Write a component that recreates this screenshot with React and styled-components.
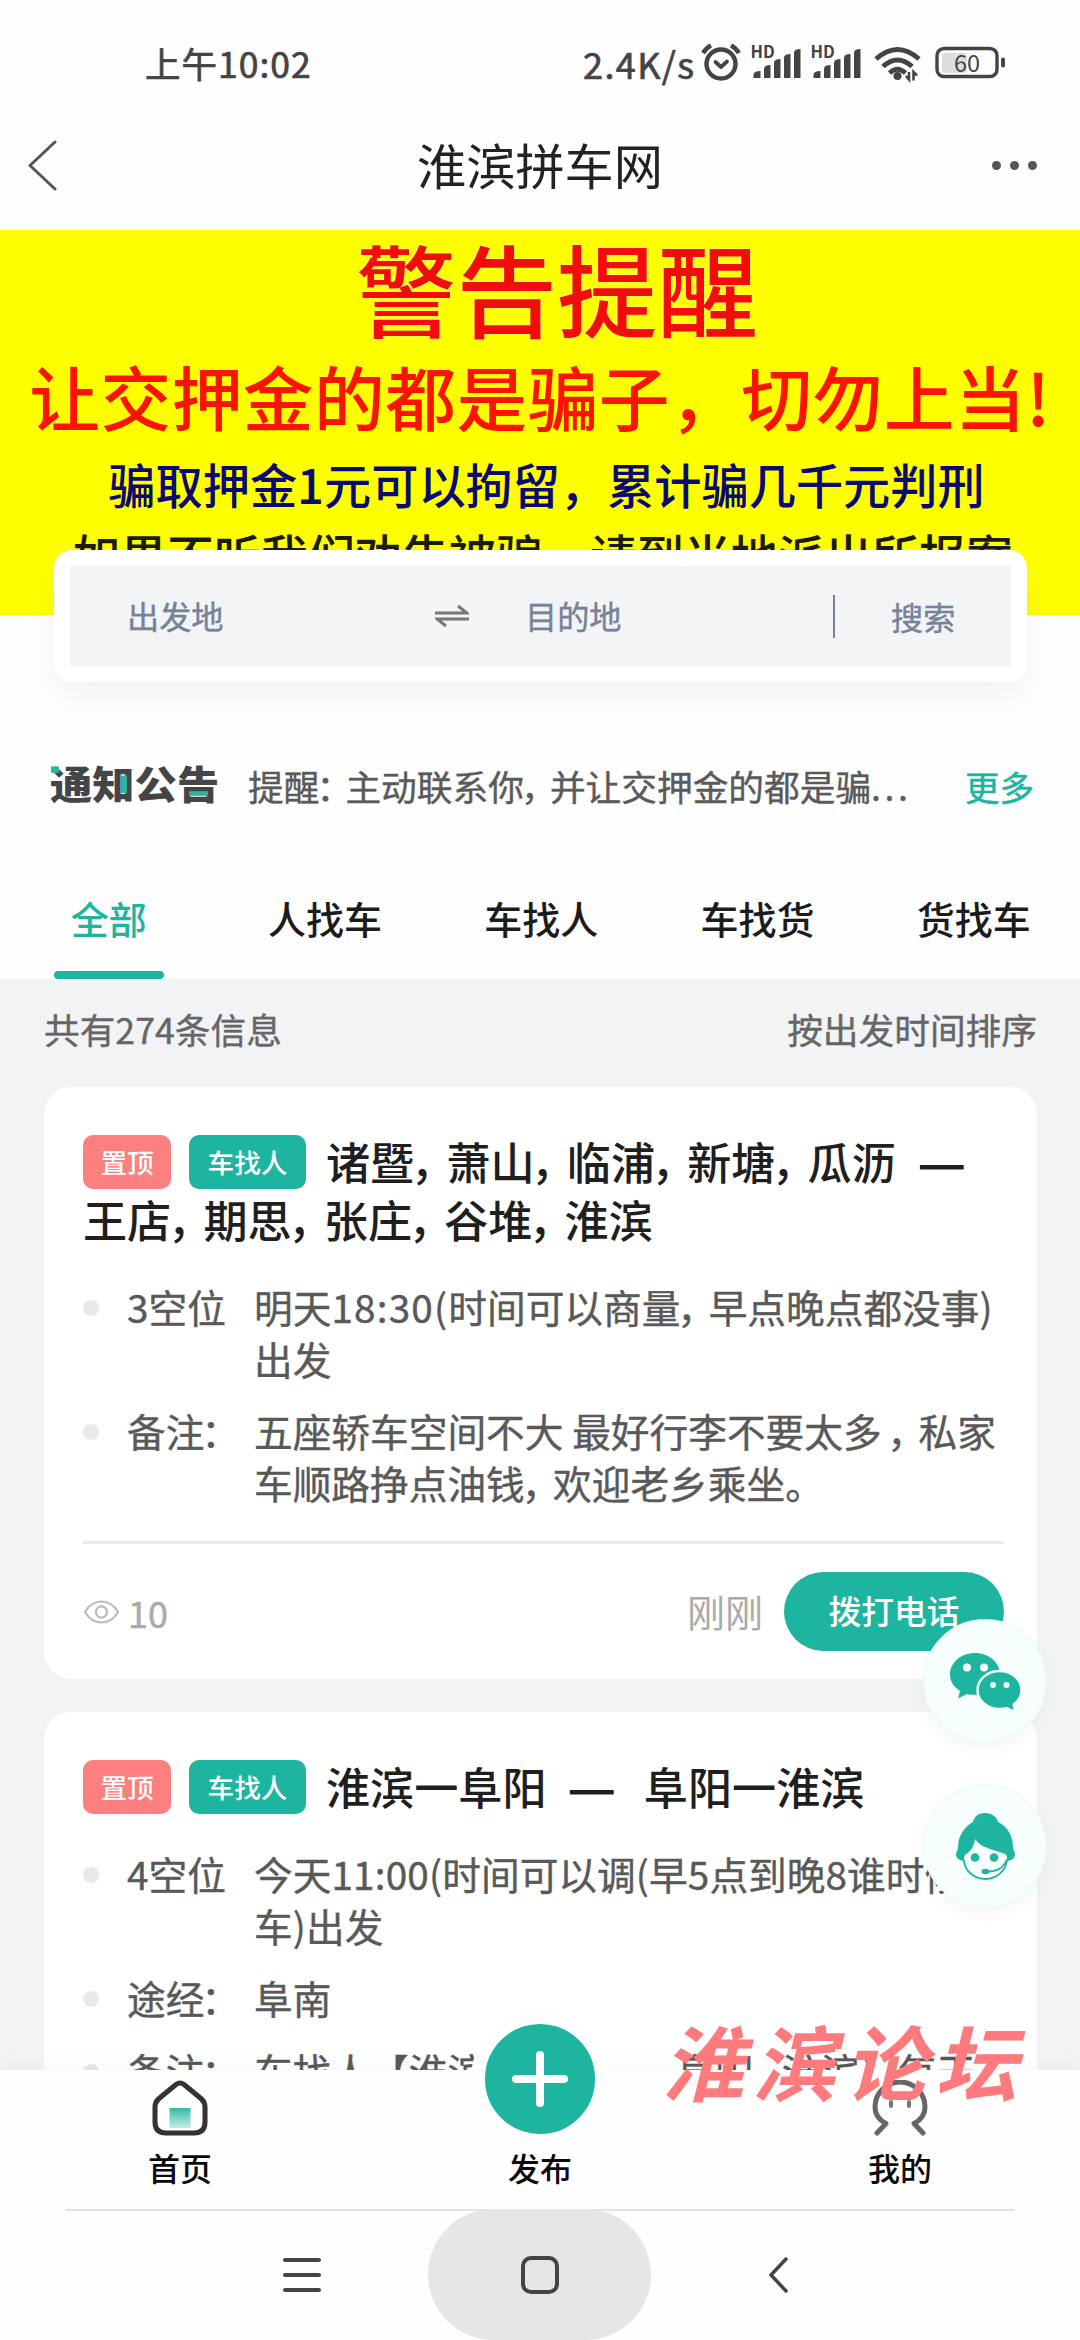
import React from "react";
import styled, { createGlobalStyle } from "styled-components";

const teal = "#1db59f";
const grey = "#f2f3f5";

const GlobalStyle = createGlobalStyle`
  * {
    box-sizing: border-box;
  }
  body {
    margin: 0;
    background: #fefefe;
    font-family: "Noto Sans CJK SC", "Noto Sans", sans-serif;
  }
`;

const Page = styled.div`
  position: relative;
  display: flex;
  flex-direction: column;
  width: 1080px;
  height: 2340px;
  overflow: hidden;
  background: #fefefe;
`;

/* ---------- status bar ---------- */

const StatusBar = styled.div`
  display: flex;
  justify-content: space-between;
  align-items: center;
  height: 104px;
  padding: 22px 74px 0 145px;
  color: #444;
`;

const Clock = styled.div`
  font-size: 35.5px;
  line-height: 40px;
  letter-spacing: 1px;
  -webkit-text-stroke: 0.7px #444;
`;

const StatusIcons = styled.div`
  display: flex;
  align-items: center;
  color: #444;
`;

const NetSpeed = styled.div`
  width: 117px;
  font-size: 36px;
  line-height: 40px;
  letter-spacing: 1.4px;
  white-space: nowrap;
  -webkit-text-stroke: 0.7px #444;
`;

const StatusSvg = styled.svg`
  display: block;
  font-family: "Noto Sans CJK SC", sans-serif;
`;

/* ---------- title bar ---------- */

const TitleBar = styled.header`
  display: grid;
  grid-template-columns: 200px 1fr 200px;
  align-items: center;
  height: 126px;
  padding: 0 43px 4px 27px;
`;

const PageTitle = styled.h1`
  margin: 0;
  padding-left: 16px;
  text-align: center;
  font-size: 49.2px;
  font-weight: 400;
  line-height: 60px;
  color: #222;
  transform: translateY(-1px);
`;

const MoreDots = styled.div`
  display: flex;
  justify-content: flex-end;
  gap: 9px;
`;

const Dot = styled.i`
  width: 9px;
  height: 9px;
  border-radius: 50%;
  background: #555;
`;

/* ---------- banner ---------- */

const Banner = styled.section`
  flex: none;
  height: 385px;
  overflow: hidden;
  background: #ffff00;
  text-align: center;
  white-space: nowrap;
`;

const BannerLine = styled.div`
  height: ${(p) => p.$height}px;
  line-height: ${(p) => p.$height}px;
  padding-left: ${(p) => p.$indent || 0}px;
  font-size: ${(p) => p.$size}px;
  font-weight: 500;
  letter-spacing: ${(p) => p.$track || 0}px;
  color: ${(p) => p.$color};
  text-shadow: 0 0 3px ${(p) => p.$glow || "transparent"};
  transform: translateY(${(p) => -p.$size * 0.055}px);
`;

/* ---------- search ---------- */

const SearchCard = styled.div`
  flex: none;
  z-index: 1;
  width: 973px;
  height: 132px;
  margin: -65px 0 0 54px;
  padding: 16px;
  border-radius: 18px;
  background: #fff;
  box-shadow: 0 14px 36px rgba(0, 0, 0, 0.05);
`;

const SearchFields = styled.div`
  display: grid;
  grid-template-columns: 308px 147px 308px 1fr;
  align-items: center;
  height: 100px;
  background: #f2f4f5;
  color: #75829a;
  font-size: 32.2px;
  line-height: 40px;
  -webkit-text-stroke: 0.4px #75829a;
`;

const Field = styled.div`
  padding-left: ${(p) => p.$indent || 0}px;
  transform: translateY(-1px);
`;

const SearchButton = styled.div`
  display: flex;
  align-items: center;
  height: 43px;
  padding-left: 56px;
  border-left: 2px solid #75829a;
`;

const SwapIcon = styled.svg`
  display: block;
  margin-left: 57px;
`;

/* ---------- notice ---------- */

const Notice = styled.div`
  flex: none;
  display: flex;
  align-items: center;
  height: 173px;
  padding: 34px 0 0 50px;
  font-size: 35.7px;
  line-height: 44px;
  white-space: nowrap;
`;

const NoticeLogo = styled.div`
  position: relative;
  width: 198px;
  font-size: 42.3px;
  font-weight: 900;
  color: #454545;
  transform: translateY(-4px) scaleY(0.92);
`;

const LogoAccent = styled.i`
  position: absolute;
  left: ${(p) => p.$x}px;
  top: ${(p) => p.$y}px;
  width: ${(p) => p.$w}px;
  height: ${(p) => p.$h}px;
  background: #2bb49b;
`;

const NoticeText = styled.div`
  width: 717px;
  color: #5a5a5a;
  -webkit-text-stroke: 0.4px #5a5a5a;
`;

const Ellipsis = styled.span`
  letter-spacing: 3.5px;
`;

const NoticeMore = styled.div`
  font-size: 34.5px;
  color: ${teal};
  -webkit-text-stroke: 0.5px ${teal};
`;

/* ---------- tabs ---------- */

const Tabs = styled.nav`
  flex: none;
  display: grid;
  grid-template-columns: repeat(5, 216.3px);
  height: 124px;
`;

const Tab = styled.div`
  display: flex;
  flex-direction: column;
  align-items: center;
  justify-content: flex-end;
  gap: 28px;
  padding-left: 1px;
  font-size: 38px;
  font-weight: 500;
  line-height: 50px;
  color: ${(p) => (p.$active ? teal : "#1c1c1c")};

  &::after {
    content: "";
    width: 110px;
    height: 8px;
    border-radius: 4px;
    background: ${(p) => (p.$active ? teal : "transparent")};
  }
`;

/* ---------- list ---------- */

const ListArea = styled.main`
  flex: 1;
  min-height: 0;
  overflow: hidden;
  padding: 0 43px 0 44px;
  background: ${grey};
`;

const ListHead = styled.div`
  display: flex;
  justify-content: space-between;
  height: 108px;
  line-height: 100px;
  font-size: 35.7px;
  color: #666;
  -webkit-text-stroke: 0.4px #666;
`;

const Card = styled.article`
  display: flex;
  flex-direction: column;
  height: 592px;
  margin-bottom: 33px;
  padding: 45px 33px 0 39px;
  border-radius: 27px;
  background: #fff;
`;

const CardTitle = styled.h2`
  margin: 0 -20px 0 0;
  font-size: 44.1px;
  font-weight: 500;
  line-height: 58px;
  color: #1f1f1f;
  white-space: pre;
`;

const TitleLine = styled.div`
  display: flex;
  align-items: center;
  height: 58px;
`;

const Tag = styled.span`
  flex: none;
  width: ${(p) => p.$width}px;
  height: 54px;
  margin-right: ${(p) => p.$gap}px;
  border-radius: 10px;
  background: ${(p) => p.$bg};
  color: #fff;
  font-size: 26.6px;
  line-height: 53px;
  text-align: center;
  transform: translateY(1px);
`;

const Dash = styled.span`
  display: inline-block;
  margin: 0 12px 0 6px;
  transform: scaleX(1.2);
  -webkit-text-stroke: 1px #1f1f1f;
`;

const Details = styled.div`
  display: flex;
  flex-direction: column;
  gap: 21px;
  margin-top: 34px;
`;

const Detail = styled.div`
  display: grid;
  grid-template-columns: 44px 127px 1fr;
  font-size: 38.7px;
  line-height: 51.6px;
  color: #595959;
  white-space: pre;
  -webkit-text-stroke: 0.4px #595959;

  &::before {
    content: "";
    width: 16px;
    height: 16px;
    margin-top: 18px;
    border-radius: 50%;
    background: #e9e9e9;
  }
`;

const DetailText = styled.div`
  transform: translateY(-1px);
`;

/* full-width marks are set narrower than one em */
const NarrowMark = styled.span`
  display: inline-block;
  width: 0.73em;
  text-indent: -0.08em;
`;

const Digits = styled.span`
  letter-spacing: ${(p) => p.$track}px;
`;

const CardFoot = styled.div`
  display: flex;
  align-items: center;
  height: 139px;
  margin-top: 32px;
  border-top: 3px solid #ebebeb;
  color: #aaa;
  font-size: 38px;
`;

const Views = styled.div`
  display: flex;
  align-items: center;
  gap: 8px;
  flex: 1;
  font-size: 36px;
  line-height: 40px;
  -webkit-text-stroke: 0.5px #aaa;
`;

const PostedAt = styled.span`
  margin-right: 21px;
  transform: translateY(-1px);
`;

const CallButton = styled.div`
  width: 220px;
  height: 79px;
  border-radius: 40px;
  background: ${teal};
  color: #fff;
  font-size: 32.8px;
  font-weight: 500;
  line-height: 76px;
  text-align: center;
`;

/* ---------- floating buttons ---------- */

const FloatStack = styled.div`
  position: absolute;
  top: 1619px;
  left: 923px;
  display: flex;
  flex-direction: column;
  gap: 41px;
`;

const FloatButton = styled.div`
  width: 124px;
  height: 124px;
  border-radius: 50%;
  background: #f6fffe;
  border: 2px solid #ebfdf9;
  box-shadow: 0 6px 16px rgba(0, 0, 0, 0.04);

  svg {
    display: block;
    margin: -2px;
  }
`;

/* ---------- bottom bar ---------- */

const BottomBar = styled.footer`
  flex: none;
  position: relative;
  display: grid;
  grid-template-columns: repeat(3, 360px);
  grid-template-rows: 139px;
  background: #fefefe;
  box-shadow: 0 -4px 24px rgba(0, 0, 0, 0.035);
`;

const BottomItem = styled.div`
  display: flex;
  flex-direction: column;
  align-items: center;
  justify-content: flex-end;
  height: 139px;
  padding-bottom: 18px;
  font-size: 32px;
  font-weight: 500;
  line-height: 48px;
  color: #0a0a0a;

  > svg {
    display: block;
    margin-bottom: 7px;
  }
`;

const PublishCircle = styled.div`
  flex: none;
  display: flex;
  align-items: center;
  justify-content: center;
  width: 138px;
  height: 138px;
  margin-bottom: -5px;
  border: 14px solid #fefefe;
  border-radius: 50%;
  background: ${teal};
`;

const SystemNav = styled.div`
  flex: none;
  position: relative;
  display: flex;
  justify-content: center;
  align-items: center;
  height: 131px;
  padding-right: 9px;
  background: #fefefe;

  &::before {
    content: "";
    position: absolute;
    top: 0;
    left: 66px;
    right: 66px;
    height: 2px;
    background: #e2e2e2;
  }
`;

const HomePill = styled.div`
  position: relative;
  display: flex;
  align-items: center;
  justify-content: center;
  width: 223px;
  height: 131px;
  margin: 0 117px 0 107px;
  border-radius: 66px;
  background: #e6e6e6;
`;

const ForumMark = styled.div`
  position: absolute;
  left: 662px;
  top: 2005px;
  font-size: 82px;
  font-weight: 700;
  font-style: italic;
  line-height: 110px;
  letter-spacing: 9px;
  color: #ff7a7c;
  white-space: nowrap;
`;

/* ---------- icons ---------- */

const Signal = ({ x }) => (
  <g transform={`translate(${x} 0)`} fill="#444">
    <text x="-3" y="20" fontSize="16.5" fontWeight="700">HD</text>
    <path d="M0 40v-3q0-4 7-4v7z" />
    <path d="M10.500 40v-9q0-4 6.500-4v13z" />
    <path d="M20.500 40v-15q0-4 6.500-4v19z" />
    <path d="M30.500 40v-20q0-4 6.500-4v24z" />
    <path d="M40.500 40v-25q0-4 6.500-4v29z" />
  </g>
);

const StatusGlyphs = () => (
  <StatusSvg width="306" height="50" viewBox="0 0 306 50">
    <g fill="none" stroke="#444" strokeLinecap="round">
      <circle cx="21" cy="26" r="14.5" strokeWidth="4.4" />
      <path d="M15.500 24l5.500 5 6-5.500" strokeWidth="3.800" strokeLinejoin="round" />
      <path d="M3 15q3-5 8-7.500M31 7.500q5 2.500 8 7.500" strokeWidth="4.400" strokeLinecap="butt" />
    </g>
    <Signal x={53.5} />
    <Signal x={113.5} />
    <g fill="none" stroke="#444" strokeWidth="5">
      <path d="M176 21q21.500-19 43 0" />
      <path d="M183 28.500q14.500-13 29 0" />
      <path d="M189.500 35q8-7.500 16 0" strokeWidth="4.800" />
    </g>
    <circle cx="197.500" cy="38" r="4" fill="#444" />
    <path d="M209 34v7.500l-3-3.500M213.500 42.500v-8.500l3.500 3.500" fill="none" stroke="#444" strokeWidth="2.600" />
    <rect x="242" y="15" width="25" height="20" rx="3" fill="#ddd" />
    <rect x="237" y="10.500" width="60" height="28" rx="7" fill="none" stroke="#444" strokeWidth="3.400" />
    <rect x="301" y="19.500" width="4" height="10" rx="2" fill="#444" />
    <text x="267" y="33.500" fontSize="23.5" fill="#444" textAnchor="middle">60</text>
  </StatusSvg>
);

const BackIcon = ({ width, height, stroke, color }) => (
  <svg width={width} height={height} viewBox={`0 0 ${width} ${height}`}>
    <path
      d={`M${width - 2} 2L3 ${height / 2}L${width - 2} ${height - 2}`}
      fill="none"
      stroke={color}
      strokeWidth={stroke}
      strokeLinecap="round"
      strokeLinejoin="round"
    />
  </svg>
);

const EyeIcon = () => (
  <svg width="37" height="26" viewBox="0 0 37 26" fill="none" stroke="#bbb" strokeWidth="2.200">
    <path d="M2 13Q8 2.500 18.500 2.500T35 13Q29 23.500 18.500 23.500T2 13z" />
    <circle cx="18.500" cy="13" r="5.600" />
  </svg>
);

const WechatIcon = () => (
  <svg width="124" height="124" viewBox="0 0 124 124">
    <path d="M52 34c-14 0-25 9.500-25 21.500 0 7 3.500 12 10 16.500l-2 7.500 9-4.500c3 .7 5 .8 8 .8 14 0 25-9 25-20.500S66 34 52 34z" fill={teal} />
    <ellipse cx="76.500" cy="71" rx="22" ry="19" fill={teal} stroke="#f6fffe" strokeWidth="2.400" />
    <path d="M82 87l8.500 4-1.500-8z" fill={teal} />
    <g fill="#f6fffe">
      <circle cx="44" cy="48.500" r="4" />
      <circle cx="61" cy="48.500" r="4" />
      <circle cx="70" cy="66" r="3" />
      <circle cx="83.500" cy="66" r="3" />
    </g>
  </svg>
);

const ServiceIcon = () => (
  <svg width="124" height="124" viewBox="0 0 124 124">
    <path d="M62 29c7 0 12 4 13 9 10 5 15 14 15 26 0 2 2 4 2 6 0 4-3 6-7 7H40c-4-1-7-3-7-7 0-2 2-4 2-6 0-12 6-21 15-26 1-5 5-9 12-9z" fill={teal} />
    <path d="M52 55c6 9 17 10 30 15 2 1 2 3 2 5 0 10-10 19-22 19S41 85 41 75c0-1 0-3 1-4 5-3 9-8 10-16z" fill="#f6fffe" />
    <path d="M41 76c0 10 10 19 21.500 19C73 95 83 87 84 76" fill="none" stroke={teal} strokeWidth="1.800" />
    <path d="M64 87.500c10 0 16-3 20-12" fill="none" stroke={teal} strokeWidth="1.800" />
    <circle cx="52" cy="73.500" r="4.300" fill={teal} />
    <circle cx="71" cy="73.500" r="4.300" fill={teal} />
    <ellipse cx="62.500" cy="87.500" rx="4" ry="2.800" fill={teal} />
  </svg>
);

const HomeIcon = () => (
  <svg width="56" height="56" viewBox="0 0 56 56">
    <defs>
      <linearGradient id="door" x1="0" y1="0" x2="0" y2="1">
        <stop offset="0" stopColor="#34bba5" />
        <stop offset="1" stopColor="#c5ede6" />
      </linearGradient>
    </defs>
    <path
      d="M24 4.500Q28 1.500 32 4.500L49 18.500Q53 22 53 27V42Q53 53 42 53H14Q3 53 3 42V27Q3 22 7 18.500z"
      fill="none"
      stroke="#333"
      strokeWidth="5"
    />
    <rect x="17.500" y="28" width="21" height="20" fill="url(#door)" />
  </svg>
);

const PersonIcon = () => (
  <svg width="58" height="56" viewBox="0 0 58 56" fill="none" stroke="#666" strokeLinecap="round" strokeLinejoin="round">
    <path d="M6 53l9-9.500C8 40 4 34 4 27a25 25 0 0 1 50 0c0 7-4 13-11 16.500L52 53" strokeWidth="5" />
    <path d="M20 22v4M38 22v4" strokeWidth="4" stroke="#777" />
  </svg>
);

/* ---------- data ---------- */

const tabs = ["全部", "人找车", "车找人", "车找货", "货找车"];

const posts = [
  {
    title: ["诸暨，萧山，临浦，新塘，瓜沥  —", "王店，期思，张庄，谷堆，淮滨"],
    track: 1.2,
    rows: [
      ["3空位", ["明天18:30(时间可以商量，早点晚点都没事)", "出发"]],
      ["备注：", ["五座轿车空间不大 最好行李不要太多 ，私家", "车顺路挣点油钱，欢迎老乡乘坐。"]],
    ],
    views: 10,
    time: "刚刚",
  },
  {
    title: ["淮滨一阜阳  —  阜阳一淮滨"],
    track: 0.2,
    rows: [
      ["4空位", ["今天11:00(时间可以调(早5点到晚8谁时候发", "车)出发"]],
      ["途经：", ["阜南"]],
      ["备注：", ["车找人【淮滨——————阜阳，淮滨】每天"]],
    ],
  },
];

const Mixed = ({ text, track = 0 }) =>
  text.split(/([，：]|[0-9:()]+|\.{3}|  —)/).map((part, i) => {
    if (/^[，：]$/.test(part)) return <NarrowMark key={i}>{part}</NarrowMark>;
    if (/^[0-9:()]+$/.test(part)) return <Digits key={i} $track={track}>{part}</Digits>;
    if (part === "...") return <Ellipsis key={i}>{part}</Ellipsis>;
    if (part === "  —") return <React.Fragment key={i}>{"  "}<Dash>—</Dash></React.Fragment>;
    return part;
  });

const Post = ({ post }) => (
  <Card>
    <CardTitle>
      {post.title.map((line, i) => (
        <TitleLine key={line}>
          {i === 0 && <Tag $width={88} $gap={18} $bg="#fd8080">置顶</Tag>}
          {i === 0 && <Tag $width={117} $gap={20} $bg={teal}>车找人</Tag>}
          <span><Mixed text={line} /></span>
        </TitleLine>
      ))}
    </CardTitle>
    <Details>
      {post.rows.map(([label, lines]) => (
        <Detail key={label}>
          <DetailText><Mixed text={label} /></DetailText>
          <DetailText>
            {lines.map((line) => (
              <div key={line}><Mixed text={line} track={post.track} /></div>
            ))}
          </DetailText>
        </Detail>
      ))}
    </Details>
    {post.time && (
      <CardFoot>
        <Views>
          <EyeIcon />
          {post.views}
        </Views>
        <PostedAt>{post.time}</PostedAt>
        <CallButton>拨打电话</CallButton>
      </CardFoot>
    )}
  </Card>
);

export default function App() {
  return (
    <Page>
      <GlobalStyle />
      <StatusBar>
        <Clock>上午10:02</Clock>
        <StatusIcons>
          <NetSpeed>2.4K/s</NetSpeed>
          <StatusGlyphs />
        </StatusIcons>
      </StatusBar>
      <TitleBar>
        <BackIcon width={30} height={51} stroke={3} color="#555" />
        <PageTitle>淮滨拼车网</PageTitle>
        <MoreDots>
          <Dot />
          <Dot />
          <Dot />
        </MoreDots>
      </TitleBar>

      <Banner>
        <BannerLine $height={124} $size={100.5} $indent={34} $color="#f20d0d" $glow="#fff3b0">警告提醒</BannerLine>
        <BannerLine $height={90} $size={70.8} $track={0.4} $color="#fa1400">让交押金的都是骗子，切勿上当!</BannerLine>
        <BannerLine $height={86} $size={47.2} $indent={13} $color="#0a0a70">骗取押金1元可以拘留，累计骗几千元判刑</BannerLine>
        <BannerLine $height={54} $size={47} $indent={6} $color="#1c1c08">如果不听我们劝告被骗，请到当地派出所报案</BannerLine>
      </Banner>

      <SearchCard>
        <SearchFields>
          <Field $indent={57}>出发地</Field>
          <SwapIcon width="34" height="24" viewBox="0 0 34 24">
            <path d="M0 9h32L23 2M34 15H2l9 7" fill="none" stroke="#777" strokeWidth="3" />
          </SwapIcon>
          <Field>目的地</Field>
          <SearchButton>搜索</SearchButton>
        </SearchFields>
      </SearchCard>

      <Notice>
        <NoticeLogo>
          通知公告
          <LogoAccent $x={1} $y={5} $w={8} $h={7} />
          <LogoAccent $x={71} $y={15} $w={6} $h={19} />
          <LogoAccent $x={139} $y={32} $w={19} $h={5} />
        </NoticeLogo>
        <NoticeText><Mixed text="提醒：主动联系你，并让交押金的都是骗..." /></NoticeText>
        <NoticeMore>更多</NoticeMore>
      </Notice>

      <Tabs>
        {tabs.map((name, i) => (
          <Tab key={name} $active={i === 0}>{name}</Tab>
        ))}
      </Tabs>

      <ListArea>
        <ListHead>
          <span>共有274条信息</span>
          <span>按出发时间排序</span>
        </ListHead>
        {posts.map((post) => (
          <Post key={post.title[0]} post={post} />
        ))}
      </ListArea>

      <BottomBar>
        <BottomItem>
          <HomeIcon />
          首页
        </BottomItem>
        <BottomItem>
          <PublishCircle>
            <svg width="56" height="56" viewBox="0 0 56 56">
              <path d="M28 4v48M4 28h48" stroke="#fff" strokeWidth="8" strokeLinecap="round" />
            </svg>
          </PublishCircle>
          发布
        </BottomItem>
        <BottomItem>
          <PersonIcon />
          我的
        </BottomItem>
      </BottomBar>

      <SystemNav>
        <svg width="38" height="34" viewBox="0 0 38 34">
          <path d="M2 2h34M2 17h34M2 32h34" stroke="#444" strokeWidth="4" strokeLinecap="round" />
        </svg>
        <HomePill>
          <svg width="38" height="38" viewBox="0 0 38 38">
            <rect x="2" y="2" width="34" height="34" rx="8" fill="none" stroke="#444" strokeWidth="4" />
          </svg>
        </HomePill>
        <BackIcon width={20} height={36} stroke={3.5} color="#444" />
      </SystemNav>

      <FloatStack>
        <FloatButton><WechatIcon /></FloatButton>
        <FloatButton><ServiceIcon /></FloatButton>
      </FloatStack>
      <ForumMark>淮滨论坛</ForumMark>
    </Page>
  );
}
